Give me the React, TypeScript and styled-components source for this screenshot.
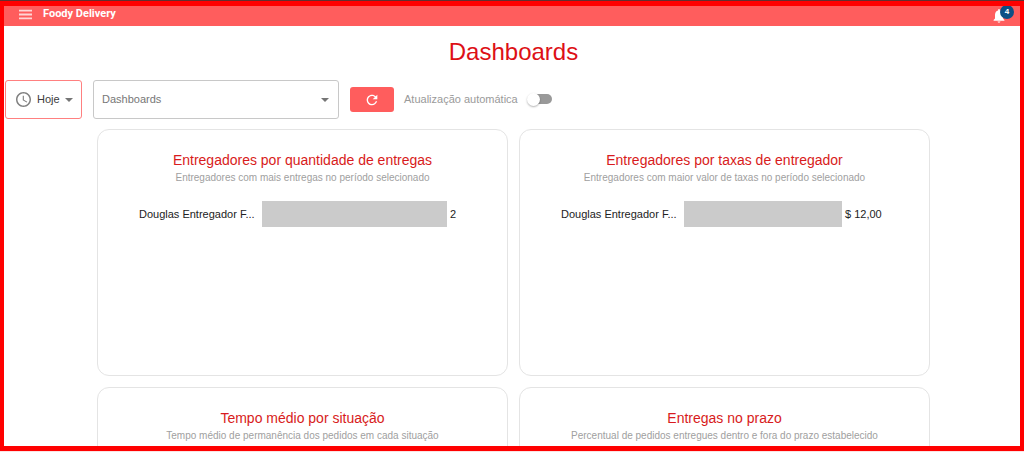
import React from "react";
import styled, { createGlobalStyle } from "styled-components";

const GlobalStyle = createGlobalStyle`
  *, *::before, *::after { box-sizing: border-box; }
  body {
    margin: 0;
    background: #fff;
    font-family: "Liberation Sans", Arial, sans-serif;
    overflow: hidden;
  }
  h1, h2, p { margin: 0; font-weight: 400; }
`;

const Window = styled.div`
  height: 100vh;
  display: flex;
  flex-direction: column;
  border-top: 1px solid #623030;
  border-bottom: 1px solid #fbe3e3;
`;

const Frame = styled.div`
  flex: 1;
  min-height: 0;
  overflow: hidden;
  border: 5px solid #ff0000;
  border-left-width: 4px;
  border-right-width: 4px;
`;

const AppBar = styled.header`
  display: flex;
  align-items: center;
  height: 20px;
  padding: 0 5px 0 14px;
  background: #ff5d5d;
  color: #fff;
`;

const IconButton = styled.button`
  position: relative;
  display: flex;
  padding: 0;
  border: 0;
  background: none;
  color: inherit;
`;

const MenuButton = styled(IconButton)`
  padding-bottom: 4px;
`;

const Brand = styled.div`
  flex: 1;
  padding: 0 0 4px 10px;
  font-family: Roboto, "Liberation Sans", sans-serif;
  font-size: 11px;
  line-height: 14px;
  font-weight: 700;
`;

const Badge = styled.span`
  position: absolute;
  top: -3px;
  left: 8px;
  width: 14px;
  height: 14px;
  border-radius: 50%;
  background: #0d4f85;
  font-size: 8px;
  line-height: 14px;
  font-weight: 700;
  text-align: center;
`;

const PageTitle = styled.h1`
  padding: 12px 0 14px 3px;
  color: #dd1016;
  font-size: 24px;
  line-height: 28px;
  text-align: center;
`;

const Toolbar = styled.div`
  display: flex;
  align-items: center;
  padding-left: 1px;
`;

const Field = styled.label<{ $color: string; $width: number; $inset: number }>`
  position: relative;
  display: flex;
  align-items: center;
  width: ${(p) => p.$width}px;
  height: 39px;
  margin-right: 11px;
  padding-left: ${(p) => p.$inset}px;
  border: 1px solid ${(p) => p.$color};
  border-radius: 3px;
`;

const Select = styled.select<{ $muted?: boolean }>`
  flex: 1;
  min-width: 0;
  height: 100%;
  padding: 0 0 2px;
  border: 0;
  outline: 0;
  appearance: none;
  background: none;
  color: ${(p) => (p.$muted ? "#777" : "#3c3c3c")};
  font: 11px "Liberation Sans", Arial, sans-serif;
`;

const Caret = styled.span<{ $right: number }>`
  position: absolute;
  right: ${(p) => p.$right}px;
  border: 4px solid transparent;
  border-top-color: #757575;
  border-bottom: 0;
  pointer-events: none;
`;

const ClockSlot = styled.span`
  display: flex;
  margin-right: 6px;
`;

const RefreshButton = styled.button`
  display: flex;
  align-items: center;
  justify-content: center;
  width: 44px;
  height: 25px;
  padding: 0;
  border: 0;
  border-radius: 3px;
  background: #ff5d5d;
  color: #fff;
`;

const SwitchLabel = styled.label`
  display: flex;
  align-items: center;
  gap: 9px;
  margin-left: 10px;
  padding-bottom: 2px;
  color: #9a9a9a;
  font-size: 11px;
  line-height: 14px;
`;

const Switch = styled.input`
  position: relative;
  width: 25px;
  height: 14px;
  margin: 0;
  appearance: none;

  &::before {
    content: "";
    position: absolute;
    inset: 2px 0 2px 2px;
    border-radius: 5px;
    background: #999;
  }
  &::after {
    content: "";
    position: absolute;
    top: 1px;
    left: 0;
    width: 13px;
    height: 13px;
    border-radius: 50%;
    background: #fff;
    box-shadow: 0 1px 2px rgba(0, 0, 0, 0.3);
  }
  &:checked::after { left: 12px; }
`;

const Cards = styled.main`
  display: grid;
  grid-template-columns: 1fr 1fr;
  gap: 11px;
  margin: 10px 90px 0 93px;
`;

const CardBox = styled.section`
  min-height: 247px;
  padding: 21px 41px;
  border: 1px solid #e4e4e4;
  border-radius: 12px;
  text-align: center;
`;

const CardTitle = styled.h2`
  color: #d81b20;
  font-size: 14px;
  line-height: 19px;
`;

const CardSubtitle = styled.p`
  color: #a0a0a0;
  font-size: 10px;
  line-height: 16px;
`;

const ChartRow = styled.div<{ $valueWidth: number }>`
  display: grid;
  grid-template-columns: 118px 1fr ${(p) => p.$valueWidth}px;
  align-items: center;
  margin-top: 15px;
  color: #222;
  font-size: 11px;
  line-height: 14px;
  text-align: left;
  white-space: nowrap;
`;

const Bar = styled.div`
  height: 26px;
  margin: 0 3px 0 5px;
  background: #cbcbcb;
`;

type CardData = {
  title: string;
  subtitle: string;
  row?: { name: string; value: string; valueWidth: number };
};

const cards: CardData[] = [
  {
    title: "Entregadores por quantidade de entregas",
    subtitle: "Entregadores com mais entregas no período selecionado",
    row: { name: "Douglas Entregador F...", value: "2", valueWidth: 16 },
  },
  {
    title: "Entregadores por taxas de entregador",
    subtitle: "Entregadores com maior valor de taxas no período selecionado",
    row: { name: "Douglas Entregador F...", value: "$ 12,00", valueWidth: 43 },
  },
  {
    title: "Tempo médio por situação",
    subtitle: "Tempo médio de permanência dos pedidos em cada situação",
  },
  {
    title: "Entregas no prazo",
    subtitle: "Percentual de pedidos entregues dentro e fora do prazo estabelecido",
  },
];

function Card({ title, subtitle, row }: CardData) {
  return (
    <CardBox>
      <CardTitle>{title}</CardTitle>
      <CardSubtitle>{subtitle}</CardSubtitle>
      {row && (
        <ChartRow $valueWidth={row.valueWidth}>
          <span>{row.name}</span>
          <Bar />
          <span>{row.value}</span>
        </ChartRow>
      )}
    </CardBox>
  );
}

export default function App() {
  return (
    <Window>
      <GlobalStyle />
      <Frame>
        <AppBar>
          <MenuButton aria-label="Menu">
            <svg width="15" height="15" viewBox="0 0 15 15" fill="#ffd5d5">
              <path d="M1 2.800h13v1.800H1zM1 6.600h13v1.800H1zM1 10.400h13v1.800H1z" />
            </svg>
          </MenuButton>
          <Brand>Foody Delivery</Brand>
          <IconButton aria-label="Notificações">
            <svg width="23" height="16" viewBox="0 0 23 16" fill="#fff">
              <path d="M7 14.8c.8 0 1.4-.5 1.4-1.2H5.600c0 .7.6 1.200 1.400 1.200zM11 10.600V7c0-2.200-1.100-4-3.100-4.500v-.5a.9.9 0 0 0-1.800 0v.5C4.100 3 3 4.800 3 7v3.600l-1.400 1.400v.7h10.800V12z" />
            </svg>
            <Badge>4</Badge>
          </IconButton>
        </AppBar>
        <PageTitle>Dashboards</PageTitle>
        <Toolbar>
          <Field $color="#ff8080" $width={77} $inset={10}>
            <ClockSlot>
              <svg width="15" height="15" viewBox="2 2 20 20" fill="#808080">
                <path d="M11.990 2C6.470 2 2 6.480 2 12s4.470 10 9.990 10C17.520 22 22 17.520 22 12S17.520 2 11.990 2zM12 20c-4.420 0-8-3.580-8-8s3.580-8 8-8 8 3.580 8 8-3.580 8-8 8zM12.500 7H11v6l5.250 3.150.75-1.230-4.500-2.670z" />
              </svg>
            </ClockSlot>
            <Select aria-label="Período">
              <option>Hoje</option>
            </Select>
            <Caret $right={8} />
          </Field>
          <Field $color="#c8c8c8" $width={246} $inset={8}>
            <Select aria-label="Dashboards" $muted>
              <option>Dashboards</option>
            </Select>
            <Caret $right={9} />
          </Field>
          <RefreshButton aria-label="Atualizar">
            <svg width="16" height="16" viewBox="0 0 24 24" fill="currentColor">
              <path d="M17.650 6.350C16.200 4.900 14.210 4 12 4c-4.420 0-7.990 3.580-7.990 8s3.570 8 7.990 8c3.730 0 6.840-2.550 7.730-6h-2.080c-.82 2.330-3.040 4-5.650 4-3.310 0-6-2.690-6-6s2.690-6 6-6c1.660 0 3.140.69 4.220 1.780L13 11h7V4z" />
            </svg>
          </RefreshButton>
          <SwitchLabel>
            Atualização automática
            <Switch type="checkbox" role="switch" />
          </SwitchLabel>
        </Toolbar>
        <Cards>
          {cards.map((card) => (
            <Card key={card.title} {...card} />
          ))}
        </Cards>
      </Frame>
    </Window>
  );
}
